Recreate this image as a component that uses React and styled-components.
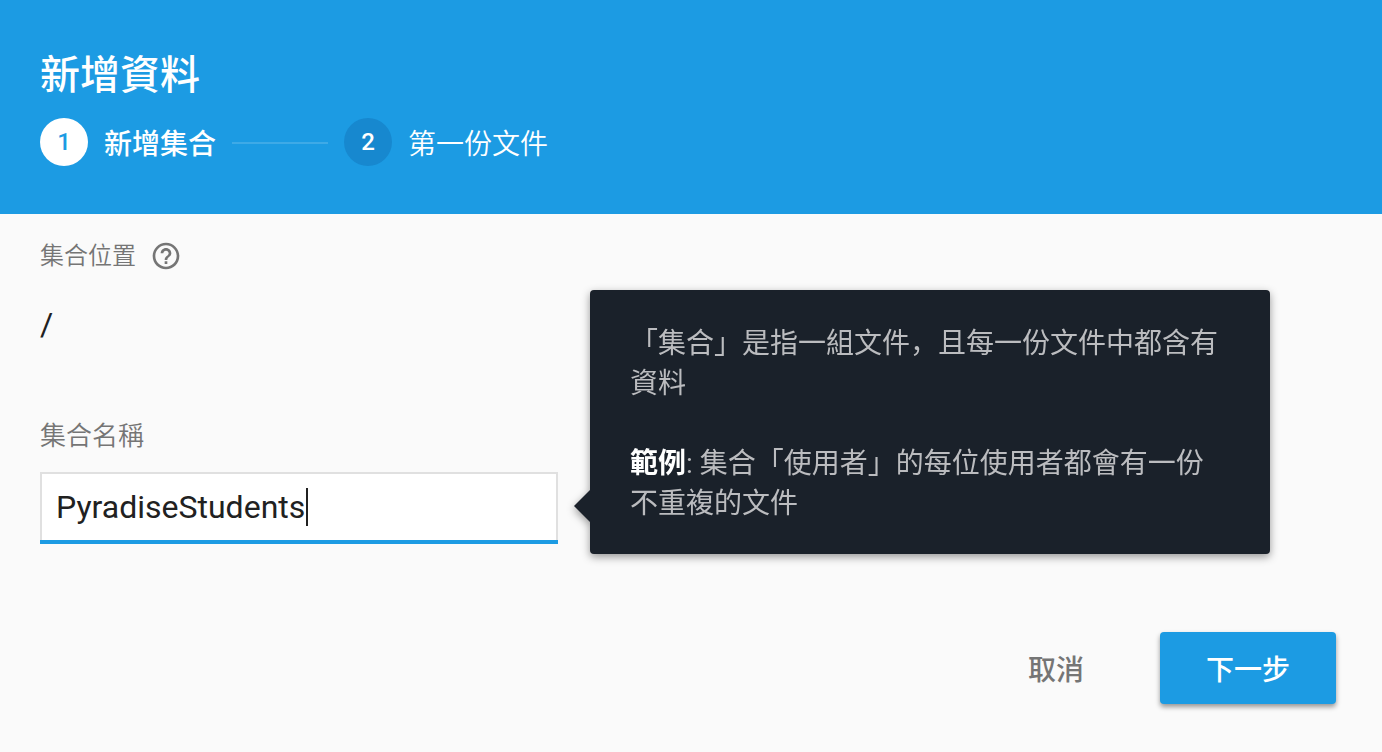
import { Fragment, useState } from "react";
import styled, { createGlobalStyle } from "styled-components";
import { MdHelpOutline } from "react-icons/md";

const steps = ["新增集合", "第一份文件"];

const App = () => {
  const [name, setName] = useState("PyradiseStudents");

  return (
    <Page>
      <GlobalStyle />

      <Header>
        <Title>新增資料</Title>
        <Stepper>
          {steps.map((label, i) => (
            <Fragment key={label}>
              {i > 0 && <Connector aria-hidden="true" />}
              <Step>
                <StepNumber $active={i === 0}>{i + 1}</StepNumber>
                <StepLabel $active={i === 0}>{label}</StepLabel>
              </Step>
            </Fragment>
          ))}
        </Stepper>
      </Header>

      <Body>
        <FormColumn>
          <LocationRow>
            集合位置
            <HelpButton type="button">
              <MdHelpOutline />
            </HelpButton>
          </LocationRow>
          <Path>/</Path>

          <Label htmlFor="collection">集合名稱</Label>
          <Field htmlFor="collection">
            <Input
              id="collection"
              value={name}
              spellCheck="false"
              autoComplete="off"
              onChange={(e) => setName(e.target.value)}
            />
            <Caret aria-hidden="true" />
          </Field>
        </FormColumn>

        <Tip>
          <p>「集合」是指一組文件，且每一份文件中都含有資料</p>
          <p>
            <b>範例</b>: 集合「使用者」的每位使用者都會有一份不重複的文件
          </p>
        </Tip>
      </Body>

      <Actions>
        <Button type="button">取消</Button>
        <Button type="button" $primary>下一步</Button>
      </Actions>
    </Page>
  );
};

export default App;

const GlobalStyle = createGlobalStyle`
  * {
    box-sizing: border-box;
  }

  body {
    margin: 0;
    background: #fafafa;
    color: #212121;
    font-family: Roboto, "Noto Sans CJK SC", sans-serif;
    -webkit-font-smoothing: antialiased;
  }

  button, input {
    font-family: inherit;
  }
`;

const Page = styled.main`
  display: flex;
  flex-direction: column;
`;

const Header = styled.header`
  padding: 48px 40px;
  background: #1c9be3;
  color: #fff;
`;

const Title = styled.h1`
  margin: 0 0 14px;
  font-size: 40px;
  font-weight: 500;
  line-height: 56px;
`;

const Stepper = styled.div`
  display: flex;
  align-items: center;
  gap: 16px;
`;

const Step = styled.div`
  display: flex;
  align-items: center;
  gap: 16px;
  line-height: 48px;
`;

const StepNumber = styled.span`
  width: 48px;
  height: 48px;
  border-radius: 50%;
  background: ${(p) => (p.$active ? "#fff" : "#1788cf")};
  color: ${(p) => (p.$active ? "#1c9be3" : "#fff")};
  font-size: 24px;
  font-weight: 500;
  text-align: center;
`;

const StepLabel = styled.span`
  font-family: "Noto Sans CJK SC", sans-serif;
  font-size: 28px;
  font-weight: ${(p) => (p.$active ? 500 : 350)};
`;

const Connector = styled.span`
  width: 96px;
  height: 2px;
  margin-top: 2px;
  background: #3eaae7;
`;

const Body = styled.div`
  display: grid;
  grid-template-columns: minmax(0, 518fr) minmax(0, 680fr);
  align-items: start;
  gap: 32px;
  padding: 26px 112px 0 40px;
`;

const FormColumn = styled.div`
  display: flex;
  flex-direction: column;
`;

const LocationRow = styled.div`
  display: flex;
  align-items: center;
  gap: 14px;
  color: #757575;
  font-size: 24px;
  font-weight: 350;
  line-height: 32px;
`;

const HelpButton = styled.button`
  display: flex;
  padding: 0;
  border: 0;
  background: none;
  color: #757575;
  font-size: 32px;
  cursor: pointer;
`;

const Path = styled.div`
  margin: 32px 0 76px;
  font-size: 32px;
  line-height: 40px;
`;

const Label = styled.label`
  margin-bottom: 20px;
  color: #757575;
  font-size: 26px;
  font-weight: 350;
  line-height: 32px;
`;

const Field = styled.label`
  display: flex;
  align-items: center;
  height: 68px;
  margin-bottom: 4px;
  padding: 0 14px;
  border: 2px solid #e0e0e0;
  border-bottom: 0;
  background: #fff;
  box-shadow: 0 4px 0 #1c9be3;
  cursor: text;
`;

const Input = styled.input`
  field-sizing: content;
  max-width: 100%;
  padding: 0;
  border: 0;
  outline: 0;
  background: none;
  color: #212121;
  font-size: 32px;
  line-height: 40px;
  caret-color: transparent;
`;

const Caret = styled.span`
  width: 2px;
  height: 38px;
  margin-left: 1px;
  background: #212121;
`;

const Tip = styled.div`
  position: relative;
  margin-top: 50px;
  padding: 34px 40px 30px;
  border-radius: 4px;
  background: #1a212a;
  color: #bbbcbf;
  font-size: 28px;
  font-weight: 400;
  line-height: 40px;
  filter: drop-shadow(0 3px 4px rgba(0, 0, 0, 0.4));

  p {
    margin: 0;
  }

  p + p {
    margin-top: 40px;
  }

  b {
    color: #fff;
    font-weight: 700;
  }

  &::before {
    content: "";
    position: absolute;
    right: 100%;
    bottom: 32px;
    border: 16px solid transparent;
    border-left-width: 0;
    border-right-color: #1a212a;
  }
`;

const Actions = styled.footer`
  display: flex;
  justify-content: flex-end;
  gap: 44px;
  padding: 78px 46px 48px;
`;

const Button = styled.button`
  height: 72px;
  padding: 0 ${(p) => (p.$primary ? 46 : 32)}px;
  border: 0;
  border-radius: 4px;
  background: ${(p) => (p.$primary ? "#1c9be3" : "none")};
  color: ${(p) => (p.$primary ? "#fff" : "#757575")};
  font-size: 28px;
  font-weight: 500;
  box-shadow: ${(p) => (p.$primary ? "0 3px 5px rgba(0, 0, 0, 0.4)" : "none")};
  cursor: pointer;
`;
